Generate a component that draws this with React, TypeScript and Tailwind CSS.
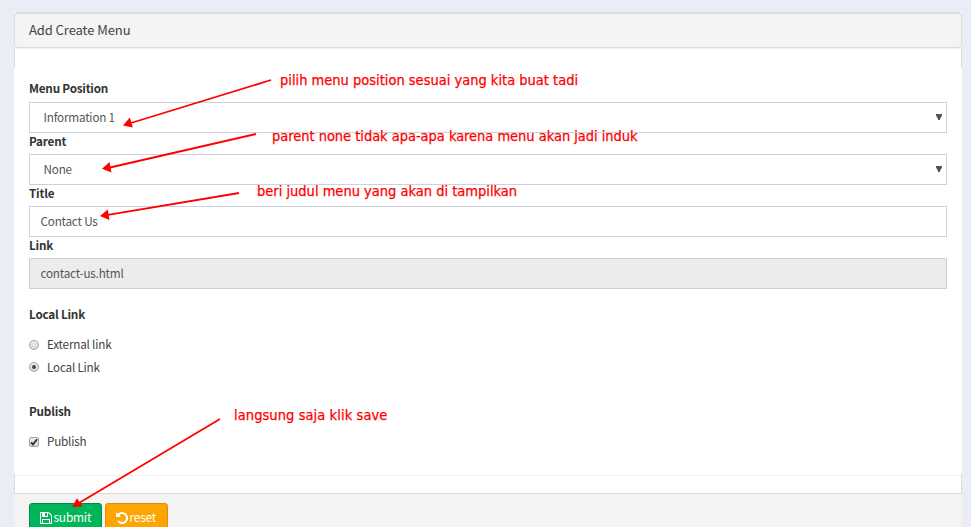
import type { ReactNode } from 'react';

function Label({ children, raised }: { children: ReactNode; raised?: boolean }) {
  return (
    <div className={`h-[21px] text-[11.7px] font-bold tracking-[-0.2px] text-[#333] ${raised ? 'leading-[13px]' : 'leading-[15px]'}`}>
      {children}
    </div>
  );
}

function SelectBox({ value }: { value: string }) {
  return (
    <div className="flex h-[31px] justify-between border border-[#cfd0de] bg-white pr-[4px] pl-[13.5px] text-[11.7px] leading-[27px] text-[#555]">
      <span>{value}</span>
      <svg width="6" height="6" viewBox="0 0 6 6" className="mt-[11px]">
        <path d="M0 0h6v1.500L4 5v1H2V5L0 1.500z" fill="#555" />
      </svg>
    </div>
  );
}

function Radio({ label, checked }: { label: string; checked?: boolean }) {
  return (
    <div className="flex h-[23px] items-center gap-[8px] text-[11.7px] leading-[23px] text-[#444]">
      <span className={`flex size-[10px] items-center justify-center rounded-full border border-[#a3a3a3] bg-linear-to-b from-[#ececec] to-[#d8d8d8] ${checked ? '-mt-[2px]' : ''}`}>
        {checked && <span className="size-[4px] rounded-full bg-[#484848]" />}
      </span>
      <span className="-mt-[2px]">{label}</span>
    </div>
  );
}

function Note({ className, children }: { className: string; children: ReactNode }) {
  return (
    <div className={`absolute font-['DejaVu_Sans_Condensed','DejaVu_Sans',sans-serif] text-[14.5px] leading-[18px] [font-stretch:condensed] whitespace-nowrap text-[#f00] [-webkit-text-stroke:0.25px_#f00] ${className}`}>
      {children}
    </div>
  );
}

export default function App() {
  return (
    <div className="relative h-[527px] w-[971px] overflow-hidden bg-[#eaedf6] pt-[12px] pr-[9px] pl-[14px] font-['Noto_Sans_CJK_SC',sans-serif] tracking-[-0.2px]">
      <div className="bg-white">
        <div className="flex h-[36px] items-center rounded-[4px] border border-t-2 border-[#dcdcdc] bg-[#f4f4f4] pb-px pl-[14px] text-[13px] tracking-[-0.08px] text-[#444] shadow-[0_1px_1px_rgba(0,0,0,0.06)]">
          <span>Add Create Menu</span>
        </div>
        <div className="h-[20px] border-x border-[#dcdcdc]" />
        <div className="h-[405px] bg-white px-[15px] pt-[13px]">
          <Label raised>Menu Position</Label>
          <SelectBox value="Information 1" />
          <Label>Parent</Label>
          <SelectBox value="None" />
          <Label>Title</Label>
          <div className="h-[31px] border border-[#cfd0de] pl-[10.5px] text-[11.7px] leading-[27px] text-[#555]">Contact Us</div>
          <Label>Link</Label>
          <div className="h-[31px] border border-[#cfd0de] bg-[#ececec] pl-[10.5px] text-[11.7px] leading-[27px] text-[#555]">contact-us.html</div>
          <div className="mt-[18px]">
            <Label raised>Local Link</Label>
          </div>
          <div className="mt-[5px]">
            <Radio label="External link" />
            <Radio label="Local Link" checked />
          </div>
          <div className="mt-[25px]">
            <Label raised>Publish</Label>
          </div>
          <div className="mt-[5px] flex h-[23px] items-center gap-[8px] text-[11.7px] leading-[23px] text-[#444]">
            <span className="flex size-[10px] items-center justify-center rounded-[2px] border border-[#a3a3a3] bg-linear-to-b from-[#ececec] to-[#dcdcdc]">
              <svg width="8" height="8" viewBox="0 0 8 8">
                <path d="M1 4.300L3 6.500L7 1.200" fill="none" stroke="#333" strokeWidth="1.9" />
              </svg>
            </span>
            <span className="-mt-[2px]">Publish</span>
          </div>
        </div>
        <div className="h-[20px] border-x border-[#dcdcdc] pt-[2px]">
          <div className="h-px bg-[#f1f1f1]" />
        </div>
      </div>
      <div className="flex h-[60px] gap-[3px] border-t border-[#dcdcdc] bg-[#f4f4f4] pt-[9px] pl-[15px] text-[11.9px] leading-[26px] text-white">
        <div className="flex h-[34px] w-[73px] gap-[1.5px] rounded-[3px] border border-[#008d4c] bg-[#00b65a] pl-[10px]">
          <svg width="12" height="12" viewBox="0 128 1536 1536" className="mt-[8px]" fill="#fff">
            <path d="M384 1536h768v-384h-768v384zm896 0h128v-896q0-14-10-38.500t-20-34.500l-281-281q-10-10-34-20t-39-10v416q0 40-28 68t-68 28h-576q-40 0-68-28t-28-68v-416h-128v1280h128v-416q0-40 28-68t68-28h832q40 0 68 28t28 68v416zm-384-928v-320q0-13-9.500-22.500t-22.500-9.500h-192q-13 0-22.500 9.500t-9.500 22.500v320q0 13 9.500 22.500t22.500 9.500h192q13 0 22.500-9.500t9.500-22.500zm640 32v928q0 40-28 68t-68 28h-1344q-40 0-68-28t-28-68v-1344q0-40 28-68t68-28h928q40 0 88 20t76 48l280 280q28 28 48 76t20 88z" />
          </svg>
          <span>submit</span>
        </div>
        <div className="flex h-[34px] w-[63px] gap-[1.5px] rounded-[3px] border border-[#e08e0b] bg-[#ffa500] pl-[10px]">
          <svg width="12" height="12" viewBox="0 128 1536 1536" className="mt-[8px]" fill="#fff">
            <path d="M1536 896q0 156-61 298t-164 245-245 164-298 61q-172 0-327-72.500t-264-204.500q-7-10-6.500-22.500t8.500-20.500l137-138q10-9 25-9 16 2 23 12 73 95 179 147t225 52q104 0 198.500-40.500t163.500-109.500 109.500-163.500 40.500-198.500-40.500-198.500-109.500-163.500-163.500-109.500-198.500-40.500q-98 0-188 35.500t-160 101.500l137 138q31 30 14 69-17 40-59 40h-448q-26 0-45-19t-19-45v-448q0-42 40-59 39-17 69 14l130 129q107-101 244.500-156.500t284.500-55.500q156 0 298 61t245 164 164 245 61 298z" />
          </svg>
          <span>reset</span>
        </div>
      </div>

      <svg className="absolute inset-0" width="971" height="527" viewBox="0 0 971 527" fill="#f00" stroke="#f00">
        <g strokeWidth="1.8">
          <path d="M271 80L131 123" />
          <path d="M256 134L110 167.500" />
          <path d="M239 193L108 214.800" />
          <path d="M220 419L79 503" />
        </g>
        <g stroke="none">
          <path d="M123 125.500L129.800 117.500L132.800 127.500z" />
          <path d="M102 168.800L109.500 162L111.500 172.500z" />
          <path d="M100 216L107.800 209.500L109.500 220z" />
          <path d="M72 507L77 498.300L82.500 506.500z" />
        </g>
      </svg>
      <Note className="top-[71px] left-[280px] tracking-normal">pilih menu position sesuai yang kita buat tadi</Note>
      <Note className="top-[127px] left-[272px] tracking-[-0.03px]">parent none tidak apa-apa karena menu akan jadi induk</Note>
      <Note className="top-[182px] left-[257px] tracking-normal">beri judul menu yang akan di tampilkan</Note>
      <Note className="top-[406px] left-[234px] tracking-[0.08px]">langsung saja klik save</Note>
    </div>
  );
}
